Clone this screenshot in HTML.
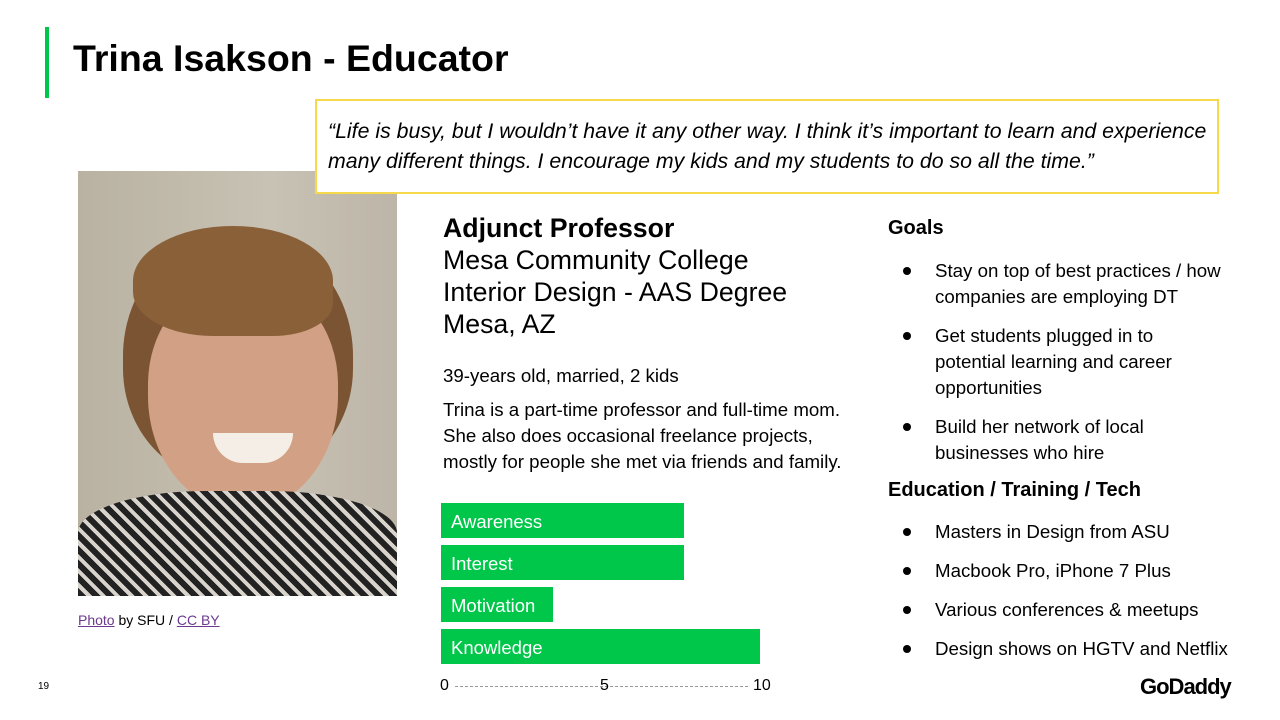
<!DOCTYPE html>
<html><head><meta charset="utf-8"><style>
body{margin:0;width:1280px;height:720px;background:#fff;font-family:"Liberation Sans",Arial,sans-serif;color:#000;position:relative;overflow:hidden}
.a{position:absolute}
.bar{position:absolute;left:441px;height:35px;background:#00c74a;color:#fff;font-size:18.5px;line-height:37px;padding-left:10px;box-sizing:border-box}
ul{margin:0;padding:0;list-style:none}
li{position:relative;padding-left:47px;font-size:18.7px;line-height:26px;margin-bottom:13px}
li:before{content:"";position:absolute;left:15px;top:9px;width:8px;height:8px;border-radius:50%;background:#000}
</style></head><body>
<div class="a" style="left:45px;top:27px;width:4px;height:71px;background:#00c74a"></div>
<div class="a" style="left:73px;top:37px;font-size:37.5px;font-weight:bold">Trina Isakson - Educator</div>

<div class="a" style="left:78px;top:171px;width:319px;height:425px;background:linear-gradient(90deg,#b9b2a2,#c8c2b4 60%,#bdb6a8);overflow:hidden">
<div class="a" style="left:45px;top:60px;width:230px;height:250px;border-radius:50% 50% 45% 45%;background:#7a5433"></div>
<div class="a" style="left:70px;top:110px;width:190px;height:230px;border-radius:45% 45% 50% 50%;background:#d2a084"></div>
<div class="a" style="left:55px;top:55px;width:200px;height:110px;border-radius:50% 50% 30% 40%;background:#8a6039"></div>
<div class="a" style="left:135px;top:262px;width:80px;height:30px;border-radius:0 0 40px 40px;background:#f4eee6"></div>
<div class="a" style="left:0;top:320px;width:319px;height:105px;background:repeating-linear-gradient(45deg,#222 0 6px,#d8d4cc 6px 10px);border-radius:40% 40% 0 0"></div>
</div>
<div class="a" style="left:78px;top:612px;font-size:14px"><span style="color:#6b3a8e;text-decoration:underline">Photo</span> by SFU / <span style="color:#6b3a8e;text-decoration:underline">CC BY</span></div>

<div class="a" style="left:315px;top:99px;width:904px;height:95px;border:2px solid #f5d94a;box-sizing:border-box;background:#fff"></div>
<div class="a" style="left:328px;top:116px;width:889px;font-size:21.3px;font-style:italic;line-height:30px">“Life is busy, but I wouldn’t have it any other way. I think it’s important to learn and experience many different things. I encourage my kids and my students to do so all the time.”</div>

<div class="a" style="left:443px;top:212px;font-size:26.7px;line-height:32px"><b>Adjunct Professor</b><br>Mesa Community College<br>Interior Design - AAS Degree<br>Mesa, AZ</div>
<div class="a" style="left:443px;top:365px;font-size:18.7px">39-years old, married, 2 kids</div>
<div class="a" style="left:443px;top:397px;font-size:18.7px;line-height:26px">Trina is a part-time professor and full-time mom.<br>She also does occasional freelance projects,<br>mostly for people she met via friends and family.</div>

<div class="bar" style="top:503px;width:243px">Awareness</div>
<div class="bar" style="top:545px;width:243px">Interest</div>
<div class="bar" style="top:587px;width:112px">Motivation</div>
<div class="bar" style="top:629px;width:319px">Knowledge</div>
<div class="a" style="left:455px;top:686px;width:293px;border-top:1px dashed #999"></div>
<div class="a" style="left:440px;top:677px;font-size:16px">0</div>
<div class="a" style="left:600px;top:677px;font-size:16px">5</div>
<div class="a" style="left:753px;top:677px;font-size:16px">10</div>

<div class="a" style="left:888px;top:217px;font-size:20px;font-weight:bold">Goals</div>
<ul class="a" style="left:888px;top:258px;width:340px">
<li>Stay on top of best practices / how companies are employing DT</li>
<li>Get students plugged in to potential learning and career opportunities</li>
<li>Build her network of local businesses who hire</li>
</ul>
<div class="a" style="left:888px;top:479px;font-size:20px;font-weight:bold">Education / Training / Tech</div>
<ul class="a" style="left:888px;top:519px;width:380px">
<li>Masters in Design from ASU</li>
<li>Macbook Pro, iPhone 7 Plus</li>
<li>Various conferences &amp; meetups</li>
<li>Design shows on HGTV and Netflix</li>
</ul>

<div class="a" style="left:38px;top:681px;font-size:10px">19</div>
<div class="a" style="left:1140px;top:674px;font-size:22px;font-weight:bold;letter-spacing:-1px">GoDaddy</div>
</body></html>
